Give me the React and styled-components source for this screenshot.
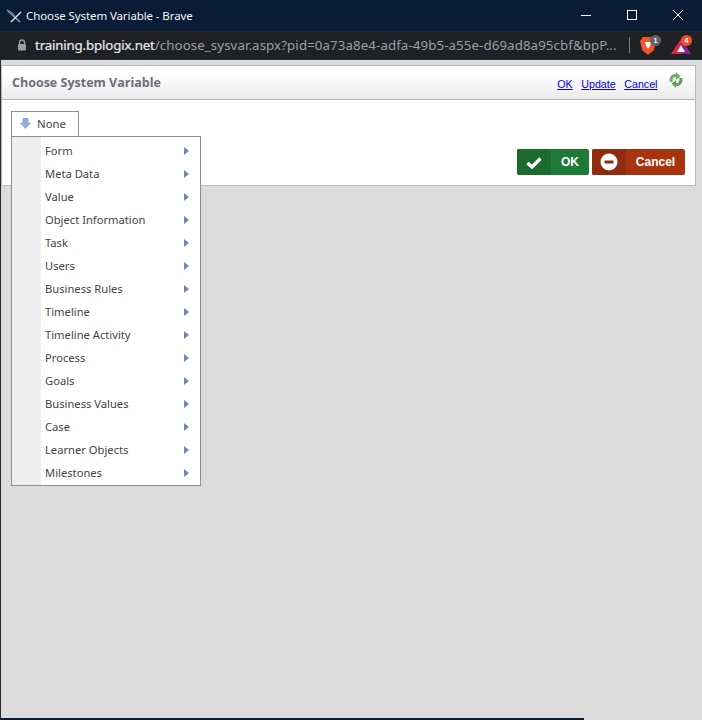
import React from "react";
import styled, { createGlobalStyle } from "styled-components";

const Global = createGlobalStyle`
  html, body { margin: 0; padding: 0; background: #dbdbdb; }
  #root { width: 702px; height: 720px; overflow: hidden; }
`;
const Win = styled.div`
  width: 702px; height: 720px; display: flex; flex-direction: column; position: relative;
  font-family: "Open Sans", "Noto Sans", sans-serif; overflow: hidden;
`;
const TitleBar = styled.div`
  height: 31px; flex: none; background: #0a1c35; display: flex; align-items: center; padding-left: 6px; color: #fff;
`;
const TitleText = styled.span`
  font-family: "Noto Sans", sans-serif; font-size: 11.5px; margin-left: 4px; letter-spacing: -0.1px; color: #f4f6f8;
`;
const WinButtons = styled.div`
  margin-left: auto; display: flex; align-items: center; height: 100%; padding-right: 1px;
`;
const WinBtn = styled.div`
  width: 46px; height: 100%; display: flex; align-items: center; justify-content: center; position: relative; top: -1px;
`;
const AddressBar = styled.div`
  height: 28px; flex: none; background: #202124; border-bottom: 1px solid #1b2f48; display: flex; align-items: center; position: relative;
`;
const Lock = styled.div`
  width: 35px; flex: none; display: flex; justify-content: flex-end; padding-right: 8px; box-sizing: border-box;
`;
const Url = styled.div`
  font-family: "Noto Sans", sans-serif; font-size: 13.3px; white-space: nowrap; width: 582px; color: #9aa0a6; letter-spacing: 0.09px;
  b { font-weight: 400; color: #e8eaed; -webkit-text-stroke: 0.2px #e8eaed; letter-spacing: -0.17px; }
`;
const Divider = styled.div`
  width: 1px; height: 16px; background: #7b7d80; margin-left: 12px;
`;
const Ext = styled.div`
  position: relative; width: 24px; height: 24px; flex: none; margin-left: ${p => p.$ml}px;
`;
const Badge = styled.span`
  position: absolute; top: ${p => p.$top}px; left: ${p => p.$left}px; width: 11px; height: 11px; border-radius: 50%; background: ${p => p.$bg};
  color: #fff; font: 700 7px/11px "Liberation Sans", sans-serif; text-align: center;
`;
const Page = styled.div`
  flex: 1; background: #dbdbdb; border-left: 1px solid #2a2a2a; padding: 5px 6px 0 0; position: relative;
`;
const Panel = styled.div`
  background: #fff; border: 1px solid #b9b9b9; height: 121px; position: relative; box-sizing: border-box; width: 695px;
`;
const PanelHead = styled.div`
  height: 34px; border-bottom: 1px solid #b5b5b5; background: linear-gradient(#ffffff 20%, #ececec); box-sizing: border-box;
  display: flex; align-items: center; padding: 0 11px 0 10px;
`;
const PanelTitle = styled.div`
  font: 700 12.5px "Open Sans", sans-serif; color: #6a6f78;
`;
const Links = styled.div`
  margin-left: auto; display: flex; align-items: center; gap: 8.5px; position: relative; top: 1px;
`;
const LinkA = styled.a`
  font: 400 10.7px "Liberation Sans", sans-serif; color: #0000ee; text-decoration: underline;
`;
const Refresh = styled.svg`
  margin-left: 2px; position: relative; top: -4px;
`;
const Body = styled.div`
  position: relative; padding: 11px 0 0 9px; height: 76px; box-sizing: border-box;
`;
const Tab = styled.div`
  width: 68px; height: 26px; box-sizing: border-box; border: 1px solid #8f8f8f; background: #fff; display: flex; align-items: center;
  padding: 0 0 2px 8px; gap: 6px; font: 400 11.4px "Noto Sans", sans-serif; color: #444;
`;
const Actions = styled.div`
  position: absolute; right: 10px; top: 49px; display: flex; gap: 3px;
`;
const Btn = styled.div`
  height: 26px; width: ${p => p.$w}px; display: flex; border-radius: 2px; overflow: hidden; background: ${p => p.$bg};
  color: #fff; font: 700 12px "Liberation Sans", sans-serif;
`;
const BtnIcon = styled.div`
  width: ${p => p.$w}px; background: ${p => p.$bg}; display: flex; align-items: center; justify-content: center; flex: none;
`;
const BtnLabel = styled.div`
  flex: 1; display: flex; align-items: center; justify-content: center;
`;
const Menu = styled.div`
  position: absolute; left: 11px; top: 136px; width: 190px; height: 350px; box-sizing: border-box; border: 1px solid #8f8f8f; background: #fff;
  display: flex; flex-direction: column; padding-top: 2px;
  background-image: linear-gradient(90deg, #eeeeee 29px, transparent 29px);
  z-index: 2;
`;
const Item = styled.div`
  height: 23px; flex: none; display: flex; align-items: center; padding-left: 33px; padding-right: 11px; justify-content: space-between;
  font: 400 11.2px "Noto Sans", sans-serif; color: #444;
`;
const Arrow = styled.span`
  width: 0; height: 0; border-left: 5px solid #6f87b5; border-top: 4px solid transparent; border-bottom: 4px solid transparent;
`;
const BottomEdge = styled.div`
  position: absolute; left: 1px; bottom: 0; width: 583px; height: 2px; background: #0a1c35;
`;

const items = ["Form","Meta Data","Value","Object Information","Task","Users","Business Rules","Timeline","Timeline Activity","Process","Goals","Business Values","Case","Learner Objects","Milestones"];

export default function App() {
  return (
    <Win>
      <Global />
      <TitleBar>
        <svg width="16" height="16" viewBox="0 0 16 16">
          <path d="M1 2 L14 14" stroke="#8fa3bd" strokeWidth="1.6" />
          <path d="M15 4 L5 14" stroke="#dfe5ec" strokeWidth="1.4" />
          <path d="M1 2 L7 5 L9 8" stroke="#5c7da5" strokeWidth="1" fill="none" />
        </svg>
        <TitleText>Choose System Variable - Brave</TitleText>
        <WinButtons>
          <WinBtn><svg width="10" height="10"><path d="M0 5.5H10" stroke="#fff" /></svg></WinBtn>
          <WinBtn><svg width="10" height="10"><rect x=".5" y=".5" width="9" height="9" fill="none" stroke="#fff" /></svg></WinBtn>
          <WinBtn><svg width="10" height="10"><path d="M0 0L10 10M10 0L0 10" stroke="#fff" /></svg></WinBtn>
        </WinButtons>
      </TitleBar>
      <AddressBar>
        <Lock>
          <svg width="10" height="12" viewBox="0 0 10 12">
            <path d="M2.5 5V3.5a2.5 2.5 0 0 1 5 0V5" fill="none" stroke="#9aa0a6" strokeWidth="1.3" />
            <rect x="1" y="5" width="8" height="6.5" rx="1" fill="#9aa0a6" />
          </svg>
        </Lock>
        <Url><b>training.bplogix.net</b>/choose_sysvar.aspx?pid=0a73a8e4-adfa-49b5-a55e-d69ad8a95cbf&amp;bpP...</Url>
        <Divider />
        <Ext $ml={6}>
          <svg width="18" height="20" viewBox="0 0 18 20" style={{ position: "absolute", left: 3, top: 3 }}>
            <path d="M4 1H14L17 5L15 14L9 19L3 14L1 5Z" fill="#f1562b" />
            <path d="M6 6H12L11 10L9 13L7 10Z" fill="#fff" />
          </svg>
          <Badge $top={2} $left={14} $bg="#5f6368">1</Badge>
        </Ext>
        <Ext $ml={11}>
          <svg width="20" height="16" viewBox="0 0 20 16" style={{ position: "absolute", left: 0, top: 6 }}>
            <path d="M10 0L20 15H0Z" fill="#e0263c" />
            <path d="M10 0L20 15H10Z" fill="#7a2a8c" />
            <path d="M10 6L14 13H6Z" fill="#f5eef2" />
          </svg>
          <Badge $top={2} $left={10} $bg="#f1502f">4</Badge>
        </Ext>
      </AddressBar>
      <Page>
        <Panel>
          <PanelHead>
            <PanelTitle>Choose System Variable</PanelTitle>
            <Links>
              <LinkA href="#">OK</LinkA>
              <LinkA href="#">Update</LinkA>
              <LinkA href="#">Cancel</LinkA>
              <Refresh width="16" height="16" viewBox="0 0 16 16">
                <path d="M2 10C0.5 5.5 3.5 1.5 8 2L8 0L12.5 4.5L7.5 8L8 5C5.5 4.8 4 7 4.8 10Z" fill="#6fae6a" />
                <path d="M14 6C15.5 10.5 12.5 14.5 8 14L8 16L3.5 11.5L8.5 8L8 11C10.5 11.2 12 9 11.2 6Z" fill="#5f9f5b" />
              </Refresh>
            </Links>
          </PanelHead>
          <Body>
            <Tab>
              <svg width="11" height="11" viewBox="0 0 11 11">
                <path d="M3 0.5H8V5H10.5L5.5 10.5L0.5 5H3Z" fill="#8fb0e0" stroke="#6f8fc4" strokeWidth=".6" />
              </svg>
              None
            </Tab>
            <Actions>
              <Btn $w={72} $bg="#1f7a38">
                <BtnIcon $w={34} $bg="#1b6a30">
                  <svg width="16" height="13" viewBox="0 0 16 13"><path d="M1.5 7L6 11L14.5 2.5" fill="none" stroke="#fff" strokeWidth="3.4" /></svg>
                </BtnIcon>
                <BtnLabel>OK</BtnLabel>
              </Btn>
              <Btn $w={93} $bg="#a8330f">
                <BtnIcon $w={34} $bg="#8f2c0d">
                  <svg width="18" height="18" viewBox="0 0 18 18"><circle cx="9" cy="9" r="8.5" fill="#fff" /><rect x="4.5" y="7.5" width="9" height="3" fill="#8f2c0d" /></svg>
                </BtnIcon>
                <BtnLabel>Cancel</BtnLabel>
              </Btn>
            </Actions>
          </Body>
        </Panel>
      </Page>
      <Menu>
        {items.map(t => <Item key={t}>{t}<Arrow /></Item>)}
      </Menu>
      <BottomEdge />
    </Win>
  );
}
